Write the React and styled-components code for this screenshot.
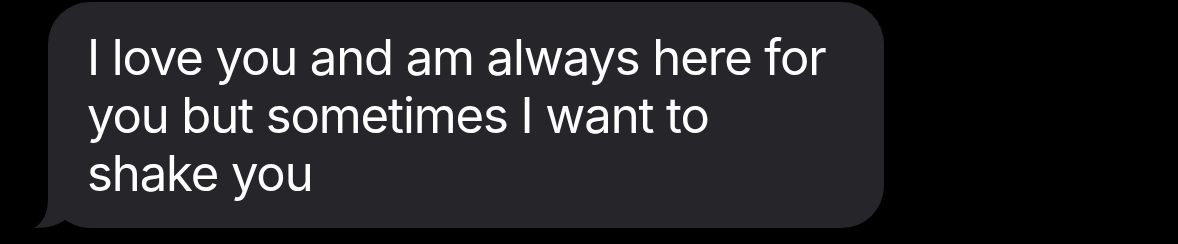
import React from 'react';
import styled, { createGlobalStyle } from 'styled-components';

const GlobalStyle = createGlobalStyle`
  html, body {
    margin: 0;
    padding: 0;
    background: #000;
  }
  body {
    width: 1178px;
    height: 244px;
    overflow: hidden;
  }
`;

const Thread = styled.div`
  display: flex;
  padding: 2px 0 0 48px;
`;

const Bubble = styled.div`
  position: relative;
  width: 836px;
  height: 226px;
  box-sizing: border-box;
  background: #262529;
  border-radius: 42px;
  padding: 27px 50px 0 39px;
`;

const Text = styled.p`
  position: relative;
  z-index: 1;
  margin: 0;
  color: #fff;
  font-family: Inter, "Liberation Sans", sans-serif;
  font-size: 49px;
  line-height: 58px;
  letter-spacing: -1.1px;
`;

const Tail = styled.svg`
  position: absolute;
  left: -16px;
  bottom: 0;
`;

function App() {
  return (
    <>
      <GlobalStyle />
      <Thread>
        <Bubble>
          <Text>I love you and am always here for you but sometimes I want to shake you</Text>
          <Tail width="70" height="44" viewBox="0 0 70 44">
            <path d="M16 0 L70 0 L70 44 L62 44 C 50 44 40 41 35 34 C 28 41 16 44 2 44 C 12 38 16 28 16 14 Z" fill="#262529" />
          </Tail>
        </Bubble>
      </Thread>
    </>
  );
}

export default App;
